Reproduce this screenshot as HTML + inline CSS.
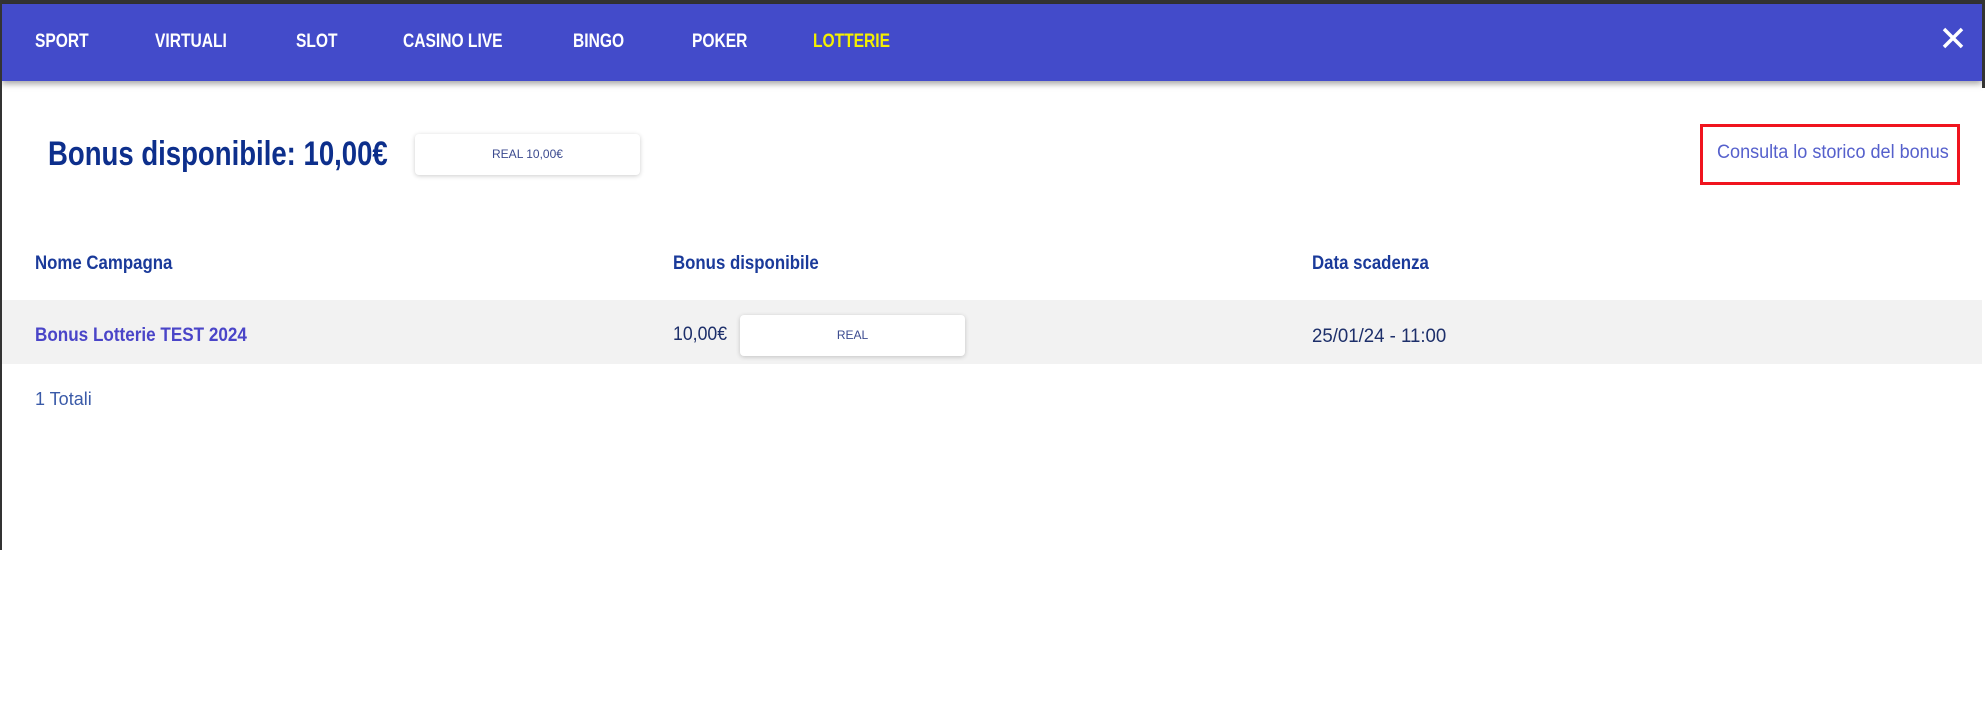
<!DOCTYPE html>
<html><head><meta charset="utf-8"><style>
*{margin:0;padding:0;box-sizing:border-box}
body{width:1985px;height:714px;background:#fff;font-family:"Liberation Sans",sans-serif;position:relative;overflow:hidden}
.abs{position:absolute;white-space:nowrap;transform-origin:0 50%}
.top{left:0;top:0;width:1985px;height:4px;background:#333}
.nav{left:2px;top:4px;width:1980px;height:77px;background:#434bca;box-shadow:0 3px 6px rgba(0,0,0,.35)}
.nav span{position:absolute;top:27px;color:#fff;font-weight:bold;font-size:19px;transform:scaleX(.82);transform-origin:0 50%;white-space:nowrap}
.lb{left:0;top:0;width:2px;height:550px;background:#333}
.rb{left:1982px;top:0;width:3px;height:88px;background:#333}
.btn{background:#fff;border-radius:4px;box-shadow:0 1px 5px rgba(0,0,0,.2);color:#3b4a8f;font-size:12px;text-align:center}
.h{color:#1a3a9a;font-weight:bold;font-size:19px;transform:scaleX(.885)}
</style></head><body>
<div class="abs top"></div>
<div class="abs nav">
<span style="left:33px">SPORT</span>
<span style="left:153px">VIRTUALI</span>
<span style="left:294px">SLOT</span>
<span style="left:401px">CASINO LIVE</span>
<span style="left:571px">BINGO</span>
<span style="left:690px">POKER</span>
<span style="left:811px;color:#f4f000">LOTTERIE</span>
<svg style="position:absolute;left:1939px;top:22px" width="24" height="24" viewBox="0 0 24 24"><path d="M3 3L21 21M21 3L3 21" stroke="#fff" stroke-width="3.5"/></svg>
</div>
<div class="abs lb"></div>
<div class="abs rb"></div>
<div class="abs" style="left:48px;top:135px;font-size:34px;font-weight:bold;color:#0d2f8c;transform:scaleX(.81)">Bonus disponibile: 10,00€</div>
<div class="abs btn" style="left:415px;top:134px;width:225px;height:41px;line-height:41px">REAL 10,00€</div>
<div class="abs" style="left:1700px;top:124px;width:260px;height:61px;border:3px solid #f0141e"></div>
<div class="abs" style="left:1717px;top:142px;font-size:19px;color:#5560cc;transform:scaleX(.95)">Consulta lo storico del bonus</div>
<div class="abs h" style="left:35px;top:253px">Nome Campagna</div>
<div class="abs h" style="left:673px;top:253px">Bonus disponibile</div>
<div class="abs h" style="left:1312px;top:253px">Data scadenza</div>
<div class="abs" style="left:2px;top:300px;width:1980px;height:64px;background:#f2f2f2"></div>
<div class="abs h" style="left:35px;top:325px;color:#4a45c8;transform:scaleX(.9)">Bonus Lotterie TEST 2024</div>
<div class="abs" style="left:673px;top:324px;font-size:19px;color:#1d2f6a;transform:scaleX(.93)">10,00€</div>
<div class="abs btn" style="left:740px;top:315px;width:225px;height:41px;line-height:41px">REAL</div>
<div class="abs" style="left:1312px;top:326px;font-size:19px;color:#1d2f6a;transform:scaleX(.98)">25/01/24 - 11:00</div>
<div class="abs" style="left:35px;top:389px;font-size:18px;color:#3a5aa8">1 Totali</div>
</body></html>
